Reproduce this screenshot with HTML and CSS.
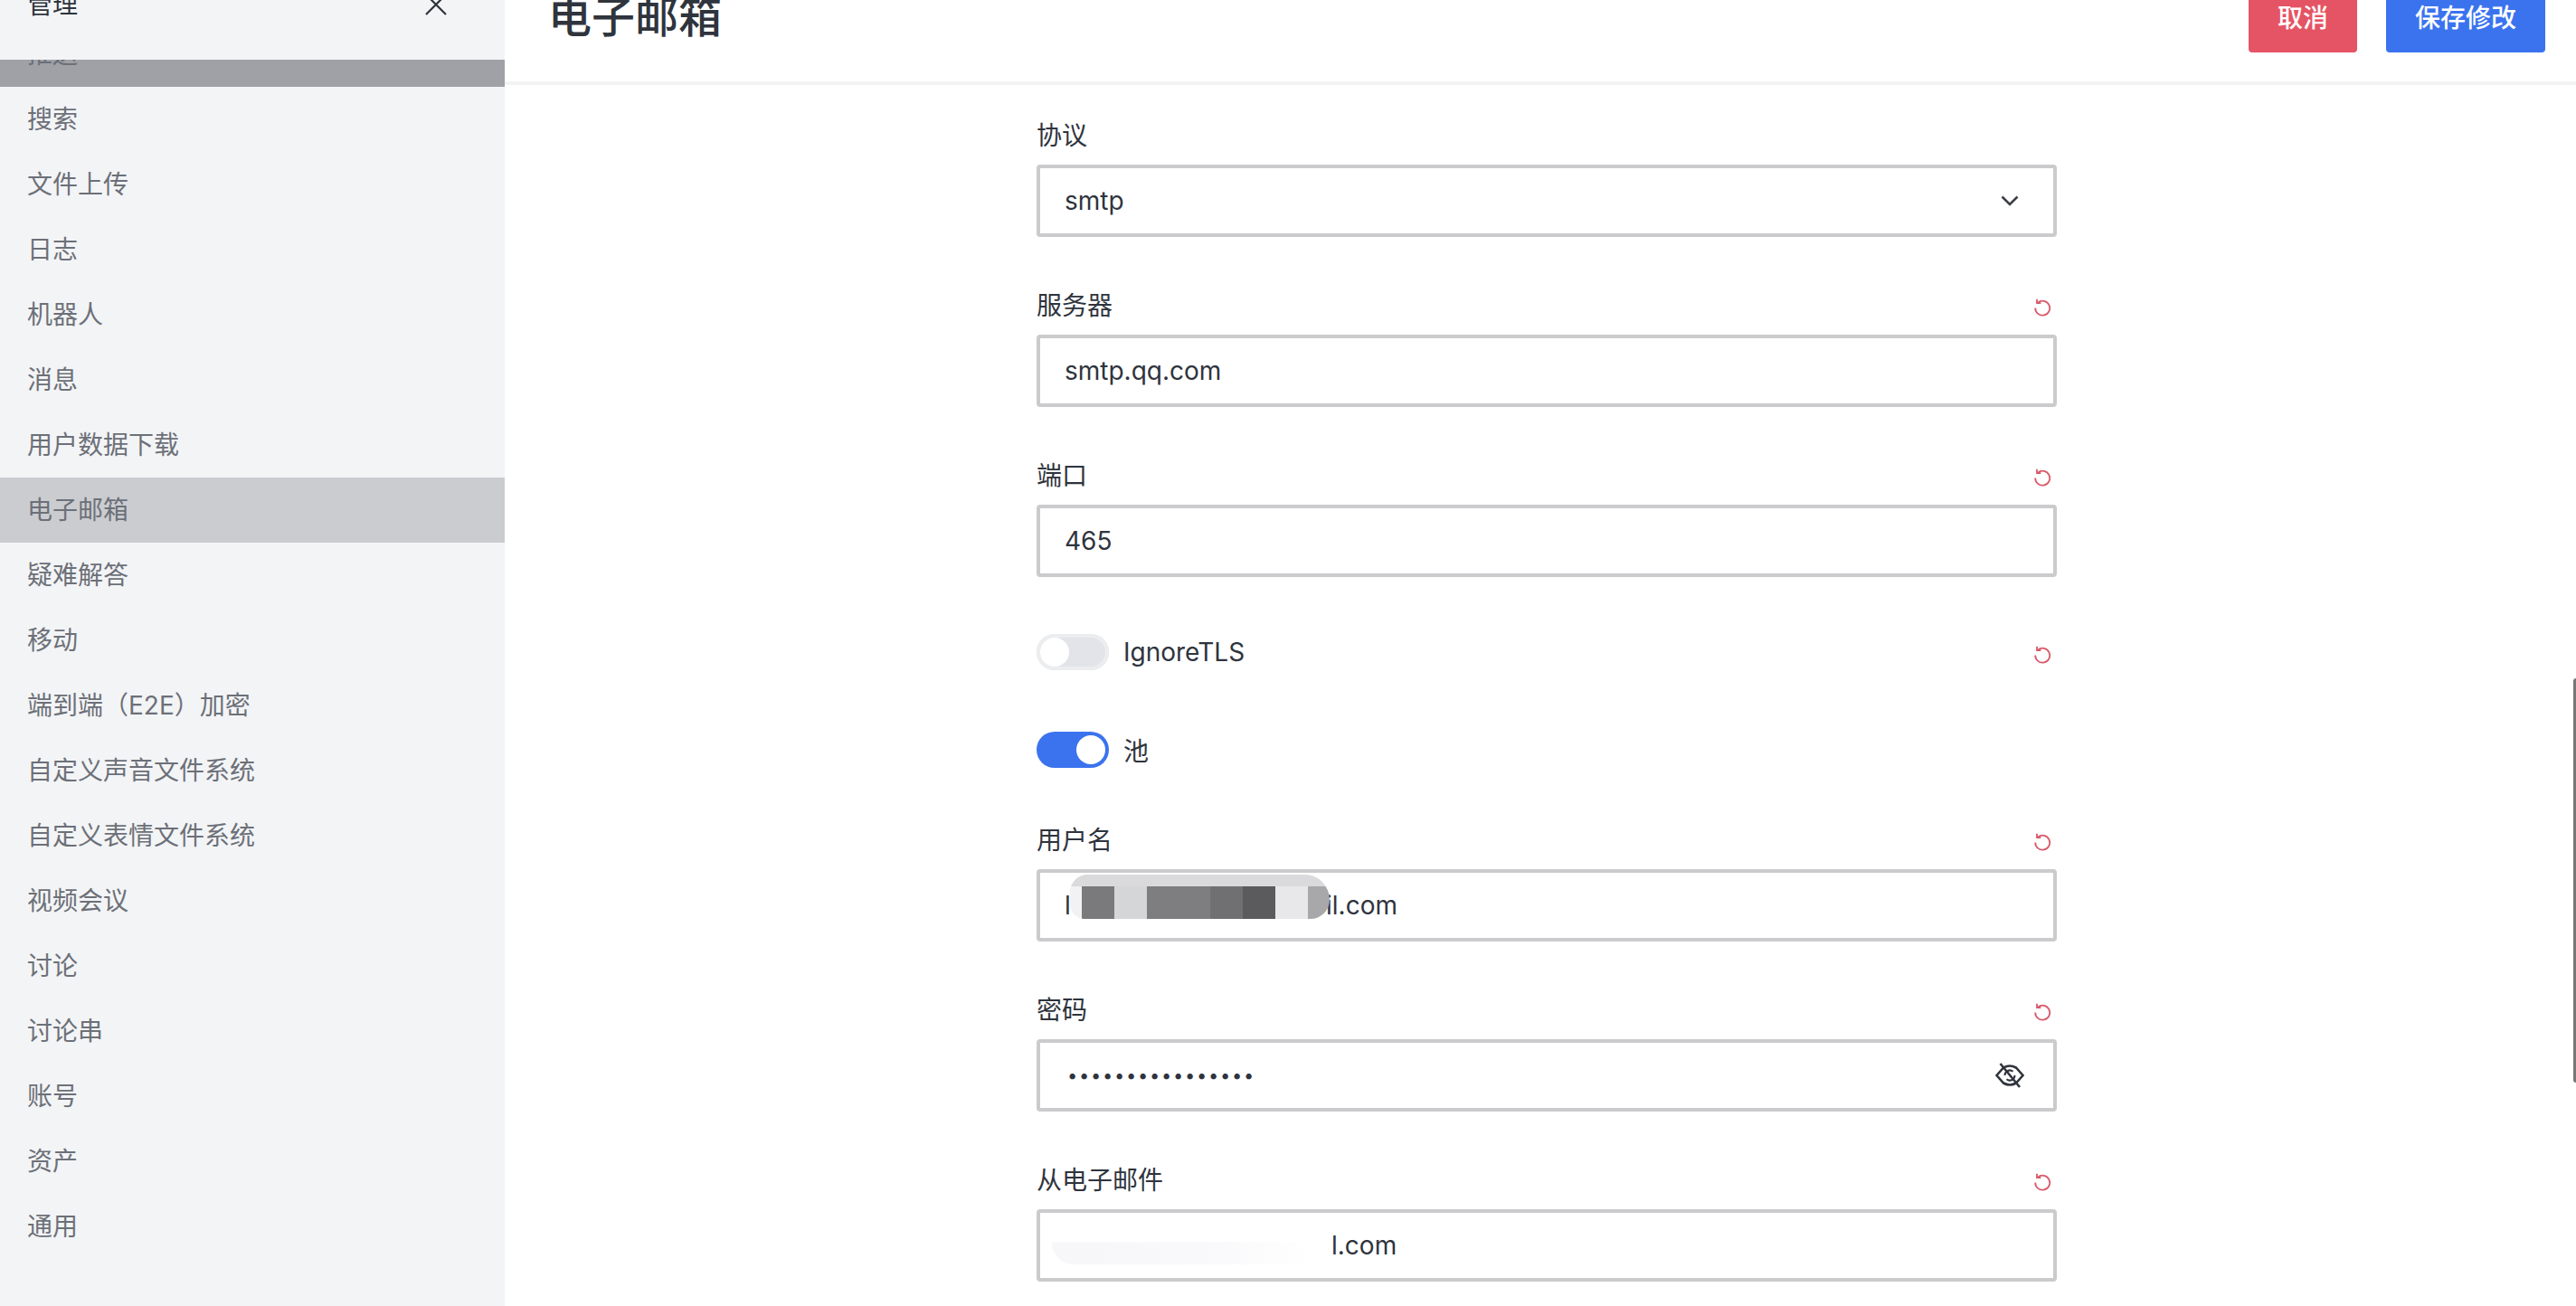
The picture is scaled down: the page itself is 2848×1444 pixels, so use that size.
FILE: index.html
```html
<!DOCTYPE html>
<html lang="zh-CN">
<head>
<meta charset="UTF-8">
<title>电子邮箱</title>
<link rel="stylesheet" href="styles.css">
</head>
<body>
<div class="layout">
    <aside class="sidebar">
        <div class="sidebar-head">
            <span class="sidebar-title">管理</span>
            <svg class="icon-close" viewBox="0 0 24 24"><path d="M1 1L23 23M23 1L1 23"/></svg>
        </div>
        <nav class="menu">
            <a class="menu-item hovered">推送</a>
            <a class="menu-item">搜索</a>
            <a class="menu-item">文件上传</a>
            <a class="menu-item">日志</a>
            <a class="menu-item">机器人</a>
            <a class="menu-item">消息</a>
            <a class="menu-item">用户数据下载</a>
            <a class="menu-item active">电子邮箱</a>
            <a class="menu-item">疑难解答</a>
            <a class="menu-item">移动</a>
            <a class="menu-item">端到端（E2E）加密</a>
            <a class="menu-item">自定义声音文件系统</a>
            <a class="menu-item">自定义表情文件系统</a>
            <a class="menu-item">视频会议</a>
            <a class="menu-item">讨论</a>
            <a class="menu-item">讨论串</a>
            <a class="menu-item">账号</a>
            <a class="menu-item">资产</a>
            <a class="menu-item">通用</a>
        </nav>
    </aside>

    <main class="content">
        <header class="page-head">
            <h1>电子邮箱</h1>
            <div class="actions">
                <button class="btn btn-cancel">取消</button>
                <button class="btn btn-save">保存修改</button>
            </div>
        </header>

        <form class="form">
            <div class="field">
                <div class="field-label"><label>协议</label></div>
                <div class="input">
                    <span>smtp</span>
                    <svg class="icon-chevron" viewBox="0 0 20 12"><path d="M1.5 1.5L10 10L18.5 1.5"/></svg>
                </div>
            </div>

            <div class="field">
                <div class="field-label">
                    <label>服务器</label>
                    <svg class="icon-reset" viewBox="0 0 18 19"><path d="M4 4.600A8 8 0 1 1 1.200 10.500M3 .8V5.200H7.400"/></svg>
                </div>
                <div class="input"><span>smtp.qq.com</span></div>
            </div>

            <div class="field">
                <div class="field-label">
                    <label>端口</label>
                    <svg class="icon-reset" viewBox="0 0 18 19"><path d="M4 4.600A8 8 0 1 1 1.200 10.500M3 .8V5.200H7.400"/></svg>
                </div>
                <div class="input"><span>465</span></div>
            </div>

            <div class="toggle-row">
                <span class="toggle"><span class="knob"></span></span>
                <span class="toggle-label">IgnoreTLS</span>
                <svg class="icon-reset" viewBox="0 0 18 19"><path d="M4 4.600A8 8 0 1 1 1.200 10.500M3 .8V5.200H7.400"/></svg>
            </div>

            <div class="toggle-row">
                <span class="toggle on"><span class="knob"></span></span>
                <span class="toggle-label">池</span>
            </div>

            <div class="field after-toggle">
                <div class="field-label">
                    <label>用户名</label>
                    <svg class="icon-reset" viewBox="0 0 18 19"><path d="M4 4.600A8 8 0 1 1 1.200 10.500M3 .8V5.200H7.400"/></svg>
                </div>
                <div class="input masked">
                    <span class="masked-start">l</span>
                    <span>il.com</span>
                    <span class="blur blur-dark"></span>
                </div>
            </div>

            <div class="field">
                <div class="field-label">
                    <label>密码</label>
                    <svg class="icon-reset" viewBox="0 0 18 19"><path d="M4 4.600A8 8 0 1 1 1.200 10.500M3 .8V5.200H7.400"/></svg>
                </div>
                <div class="input">
                    <span class="dots">••••••••••••••••</span>
                    <svg class="icon-eye" viewBox="0 0 32 28">
                        <path d="M1.500 14L9 5.500Q16 1.500 23 5.500L30.500 14L23 22.500Q16 26.500 9 22.500Z"/>
                        <path class="thin" d="M10.500 14a5.500 5.500 0 0 1 9-4.300M21.500 14a5.500 5.500 0 0 1-9 4.300"/>
                        <path d="M5.500 1L27 27"/>
                    </svg>
                </div>
            </div>

            <div class="field">
                <div class="field-label">
                    <label>从电子邮件</label>
                    <svg class="icon-reset" viewBox="0 0 18 19"><path d="M4 4.600A8 8 0 1 1 1.200 10.500M3 .8V5.200H7.400"/></svg>
                </div>
                <div class="input masked">
                    <span class="masked-start"></span>
                    <span class="masked-end">l.com</span>
                    <span class="blur blur-light"></span>
                </div>
            </div>
        </form>
    </main>
</div>
<div class="scrollbar"></div>
</body>
</html>
```

FILE: styles.css
```css
html, body {
    margin: 0;
    padding: 0;
    height: 100%;
    overflow: hidden;
}
body {
    font-family: Inter, "Noto Sans CJK SC", sans-serif;
    font-size: 28px;
    color: #2f343d;
    background-color: #fff;
}
.layout {
    display: flex;
    height: 1444px;
}

/* sidebar */
.sidebar {
    flex: 0 0 558px;
    background-color: #f3f4f6;
    overflow: hidden;
}
.sidebar-head {
    position: relative;
    z-index: 1;
    display: flex;
    justify-content: space-between;
    align-items: center;
    height: 122px;
    margin-top: -56px;
    margin-bottom: -42px;
    padding: 0 64px 0 30px;
    background-color: #f3f4f6;
    box-sizing: border-box;
}
.sidebar-title {
    line-height: 40px;
}
.icon-close {
    width: 24px;
    height: 24px;
    fill: none;
    stroke: #2f343d;
    stroke-width: 2.2;
}
.menu-item {
    display: block;
    height: 72px;
    line-height: 72px;
    padding-left: 30px;
    color: #6c7078;
}
.menu-item.hovered {
    background-color: #9fa1a7;
}
.menu-item.active {
    background-color: #cbccd0;
}

/* main */
.content {
    flex: 1;
    min-width: 0;
}
.page-head {
    display: flex;
    justify-content: space-between;
    align-items: center;
    height: 144px;
    margin-top: -54px;
    padding: 0 34px 0 48px;
    border-bottom: 4px solid #f3f3f4;
}
.page-head h1 {
    margin: -6px 0 0;
    font-size: 48px;
    font-weight: 500;
}
.actions {
    display: flex;
    gap: 32px;
}
.btn {
    height: 80px;
    border: none;
    border-radius: 4px;
    color: #fff;
    font-family: inherit;
    font-size: 28px;
    font-weight: 500;
    padding: 0 32px;
}
.btn-cancel {
    background-color: #e55464;
}
.btn-save {
    background-color: #3b73ee;
}

.form {
    width: 1128px;
    margin-left: 588px;
    padding-top: 36px;
}
.field {
    margin-bottom: 56px;
}
.field.after-toggle {
    margin-top: -1px;
}
.field-label {
    display: flex;
    justify-content: space-between;
    align-items: center;
    height: 40px;
    margin-bottom: 12px;
}
.field-label label {
    line-height: 40px;
}
.input {
    position: relative;
    display: flex;
    justify-content: space-between;
    align-items: center;
    height: 80px;
    padding: 0 32px 0 27px;
    border: 4px solid #cbcbcd;
    border-radius: 4px;
    box-sizing: border-box;
}
.input.masked {
    justify-content: flex-start;
}
.masked-start {
    display: inline-block;
    width: 289px;
}
.masked-end {
    margin-left: 6px;
}
.dots {
    margin-left: 3px;
    font-size: 20px;
    letter-spacing: 1.75px;
}

/* the two blurred-out addresses */
.blur {
    position: absolute;
}
.blur-dark {
    left: 33px;
    top: 2px;
    width: 287px;
    height: 49px;
    border-radius: 24px 34px 26px 20px;
    background:
        linear-gradient(#dadadc, #dadadc) top / 100% 13px no-repeat,
        linear-gradient(90deg,
            #f2f2f3 0, #f2f2f3 13px,
            #7a7a7c 13px, #7a7a7c 49px,
            #d5d6d8 49px, #d5d6d8 85px,
            #7e7e80 85px, #7e7e80 155px,
            #707072 155px, #707072 191px,
            #5b5b5d 191px, #5b5b5d 227px,
            #e8e8ea 227px, #e8e8ea 263px,
            #a8a8aa 263px, #a8a8aa 100%);
}
.blur-light {
    left: 13px;
    top: 2px;
    width: 290px;
    height: 55px;
    border-radius: 10px 10px 10px 24px;
    background: linear-gradient(90deg, #f7f7fa 0, #f9f9fb 60%, #fff 100%);
    clip-path: polygon(0 55%, 100% 55%, 100% 100%, 0 100%);
}

/* toggles */
.toggle-row {
    display: flex;
    align-items: center;
    gap: 16px;
    height: 54px;
    margin-bottom: 54px;
}
.toggle {
    display: inline-flex;
    width: 80px;
    height: 40px;
    padding: 4px;
    border-radius: 20px;
    background-color: #e2e4e9;
    box-sizing: border-box;
    box-shadow: inset 0 0 0 4px #ecedef;
}
.toggle.on {
    justify-content: flex-end;
    background-color: #3b73ee;
    box-shadow: none;
}
.knob {
    width: 32px;
    height: 32px;
    border-radius: 50%;
    background-color: #fff;
}
.toggle-row .icon-reset {
    margin-left: auto;
    margin-top: 4px;
}

/* icons */
.icon-reset {
    width: 18px;
    height: 19px;
    margin-right: 7px;
    margin-top: 2px;
    fill: none;
    stroke: #d9596a;
    stroke-width: 1.8;
    overflow: visible;
}
.icon-chevron {
    width: 20px;
    height: 12px;
    margin-right: 6px;
    fill: none;
    stroke: #3c3f44;
    stroke-width: 2.6;
}
.icon-eye {
    width: 32px;
    height: 28px;
    fill: none;
    stroke: #2f343d;
    stroke-width: 2.6;
}
.icon-eye .thin {
    stroke-width: 2;
}

.scrollbar {
    position: absolute;
    right: 0;
    top: 750px;
    width: 3px;
    height: 447px;
    border-radius: 3px 0 0 3px;
    background-color: #777;
}
```
